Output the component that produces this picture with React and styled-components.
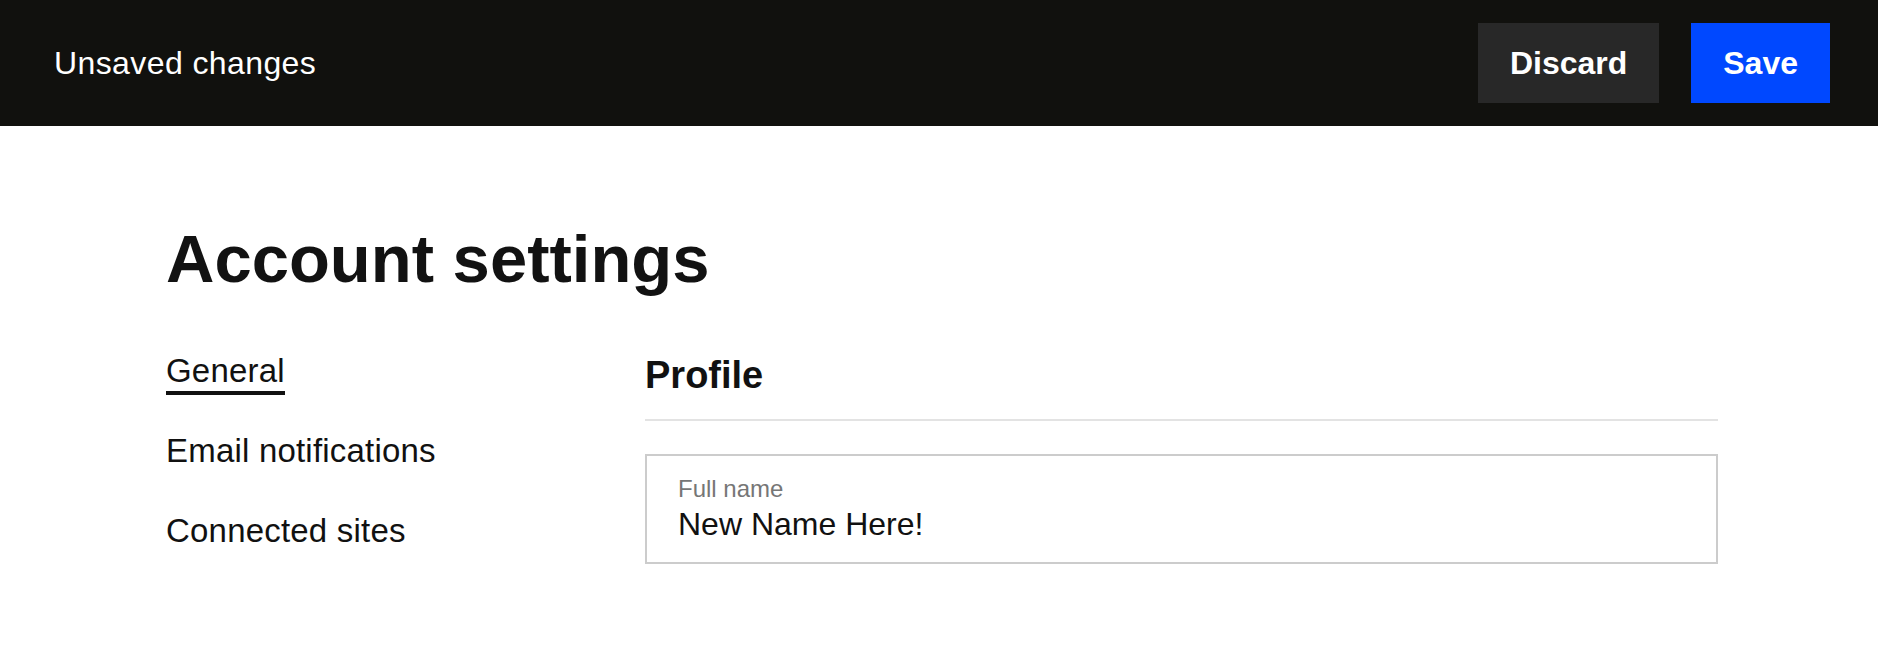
import React from "react";
import styled, { createGlobalStyle } from "styled-components";

const GlobalStyle = createGlobalStyle`
  * {
    box-sizing: border-box;
  }
  body {
    margin: 0;
    background: #ffffff;
    font-family: "Liberation Sans", Arial, sans-serif;
    color: #111111;
  }
`;

const navItems = ["General", "Email notifications", "Connected sites"];

function App() {
  return (
    <>
      <GlobalStyle />
      <Page>
        <TopBar>
          <Status>Unsaved changes</Status>
          <Actions>
            <ActionButton variant="dark">Discard</ActionButton>
            <ActionButton variant="primary">Save</ActionButton>
          </Actions>
        </TopBar>

        <Content>
          <Title>Account settings</Title>
          <Layout>
            <SideNav>
              {navItems.map((item, i) => (
                <NavItem key={item} active={i === 0}>
                  {item}
                </NavItem>
              ))}
            </SideNav>

            <Section>
              <SectionTitle>Profile</SectionTitle>
              <Field>
                <FieldLabel htmlFor="fullname">Full name</FieldLabel>
                <FieldInput id="fullname" defaultValue="New Name Here!" />
              </Field>
            </Section>
          </Layout>
        </Content>
      </Page>
    </>
  );
}

const Page = styled.div`
  width: 100%;
  min-height: 646px;
  background: #ffffff;
`;

const TopBar = styled.header`
  height: 126px;
  background: #11110e;
  display: flex;
  align-items: center;
  justify-content: space-between;
  padding: 0 48px 0 54px;
`;

const Status = styled.span`
  color: #ffffff;
  font-size: 32px;
  letter-spacing: 0.4px;
`;

const Actions = styled.div`
  display: flex;
  gap: 32px;
`;

const ActionButton = styled.button`
  height: 80px;
  padding: 0 32px;
  border: none;
  border-radius: 0;
  font-family: inherit;
  font-size: 32px;
  font-weight: 700;
  color: #ffffff;
  background: ${(p) => (p.variant === "primary" ? "#0048ff" : "#282828")};
  cursor: pointer;
`;

const Content = styled.main`
  padding: 99px 0 0 166px;
`;

const Title = styled.h1`
  margin: 0;
  font-size: 67px;
  line-height: 67px;
  font-weight: 700;
  color: #121212;
`;

const Layout = styled.div`
  display: grid;
  grid-template-columns: 479px 1073px;
  align-items: start;
  margin-top: 59px;
`;

const SideNav = styled.nav`
  display: flex;
  flex-direction: column;
  align-items: flex-start;
  gap: 36px;
`;

const NavItem = styled.a`
  display: inline-block;
  font-size: 33px;
  line-height: 40px;
  letter-spacing: 0.2px;
  color: #111111;
  border-bottom: 4px solid ${(p) => (p.active ? "#111111" : "transparent")};
  cursor: pointer;
`;

const Section = styled.section`
  display: flex;
  flex-direction: column;
  padding-top: 4px;
`;

const SectionTitle = styled.h2`
  margin: 0;
  font-size: 38px;
  line-height: 40px;
  font-weight: 700;
  color: #111111;
  padding-bottom: 24px;
  border-bottom: 2px solid #e3e3e3;
`;

const Field = styled.div`
  margin-top: 33px;
  height: 110px;
  border: 2px solid #cccccc;
  padding: 20px 31px 0;
  display: flex;
  flex-direction: column;
  gap: 4px;
`;

const FieldLabel = styled.label`
  font-size: 24px;
  line-height: 26px;
  color: #767676;
`;

const FieldInput = styled.input`
  border: none;
  outline: none;
  padding: 0;
  margin: 0;
  background: transparent;
  font-family: inherit;
  font-size: 32px;
  line-height: 36px;
  height: 36px;
  color: #111111;
  width: 100%;
`;

export default App;
